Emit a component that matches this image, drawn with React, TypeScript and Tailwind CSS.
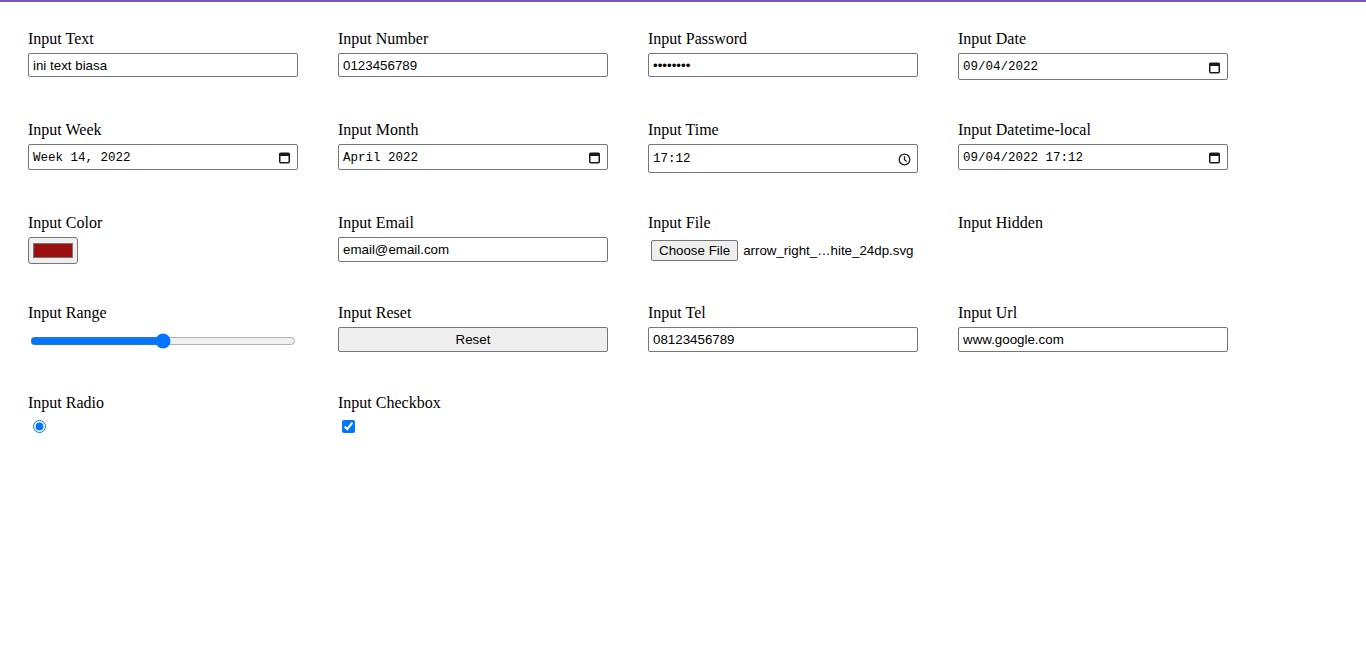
import React from "react";

const label = "block font-['Liberation_Serif',serif] text-[16px] leading-[18px] mb-[5px] text-black";
const field = "block w-[270px] border border-[#767676] rounded-[2px] px-[4px] font-['Liberation_Sans',Arial,sans-serif] text-[13.33px] text-black bg-white outline-none";
const fake = "flex items-center justify-between w-[270px] border border-[#767676] rounded-[2px] pl-[4px] pr-[6px] pt-[2px] font-['Liberation_Mono',monospace] text-[12.5px] text-black bg-white";

const CalendarIcon = () => (
    <svg width="13" height="13" viewBox="0 0 13 13" fill="none" xmlns="http://www.w3.org/2000/svg" className="-mt-[1px]">
        <rect x="1.75" y="2.25" width="9.5" height="9.5" rx="1" stroke="#1a1a1a" strokeWidth="1.5"/>
        <rect x="1.5" y="2" width="10" height="3" fill="#1a1a1a"/>
    </svg>
)

const ClockIcon = () => (
    <svg width="13" height="13" viewBox="0 0 13 13" fill="none" xmlns="http://www.w3.org/2000/svg" className="-mt-[1px]">
        <circle cx="6.5" cy="6.5" r="5.3" stroke="#1a1a1a" strokeWidth="1.3"/>
        <path d="M6.5 3.2V6.7L8.6 8.6" stroke="#1a1a1a" strokeWidth="1.3"/>
    </svg>
)

const Cell: React.FC<{ title: string, children?: React.ReactNode }> = ({title, children}) => {
    return (
        <div>
            <label className={label}>{title}</label>
            {children}
        </div>
    )
}

export default function App() {
    return (
        <div className="min-h-screen bg-white border-t-2 border-[#7d55b2] pt-[28px] pl-[28px]">
            <form className="grid grid-cols-[310px_310px_310px_310px] grid-rows-[91px_93px_90px_90px_auto]">
                <Cell title="Input Text">
                    <input type="text" defaultValue="ini text biasa" className={`${field} h-[24px]`}/>
                </Cell>
                <Cell title="Input Number">
                    <input type="number" defaultValue="0123456789" className={`${field} h-[24px]`}/>
                </Cell>
                <Cell title="Input Password">
                    <input type="password" defaultValue="12345678" className={`${field} h-[24px] text-[12px]`}/>
                </Cell>
                <Cell title="Input Date">
                    <div className={`${fake} h-[27px]`}>
                        <span>09/04/2022</span>
                        <CalendarIcon/>
                    </div>
                </Cell>

                <Cell title="Input Week">
                    <div className={`${fake} h-[26px]`}>
                        <span>Week 14, 2022</span>
                        <CalendarIcon/>
                    </div>
                </Cell>
                <Cell title="Input Month">
                    <div className={`${fake} h-[26px]`}>
                        <span>April 2022</span>
                        <CalendarIcon/>
                    </div>
                </Cell>
                <Cell title="Input Time">
                    <div className={`${fake} h-[29px]`}>
                        <span>17:12</span>
                        <ClockIcon/>
                    </div>
                </Cell>
                <Cell title="Input Datetime-local">
                    <div className={`${fake} h-[26px]`}>
                        <span>09/04/2022 17:12</span>
                        <CalendarIcon/>
                    </div>
                </Cell>

                <Cell title="Input Color">
                    <input type="color" defaultValue="#990f0f"
                           className="block w-[50px] h-[27px] border border-[#767676] rounded-[3px] bg-[#efefef] px-[2px] py-[1px] cursor-pointer"/>
                </Cell>
                <Cell title="Input Email">
                    <input type="email" defaultValue="email@email.com" className={`${field} h-[25px]`}/>
                </Cell>
                <Cell title="Input File">
                    <div className="flex items-center gap-[5px] pt-[3px] font-['Liberation_Sans',Arial,sans-serif] text-[13.33px] text-black">
                        <button type="button"
                                className="ml-[3px] h-[21px] px-[7px] border border-[#767676] rounded-[2px] bg-[#efefef] leading-none">
                            Choose File
                        </button>
                        <span>arrow_right_…hite_24dp.svg</span>
                    </div>
                </Cell>
                <Cell title="Input Hidden">
                    <input type="hidden" value="rahasia"/>
                </Cell>

                <Cell title="Input Range">
                    <input type="range" defaultValue={50} className="block ml-[2px] mt-[11px] w-[266px]"/>
                </Cell>
                <Cell title="Input Reset">
                    <button type="reset"
                            className="block w-[270px] h-[25px] pt-[1px] border border-[#767676] rounded-[2px] bg-[#efefef] font-['Liberation_Sans',Arial,sans-serif] text-[13.33px] text-black">
                        Reset
                    </button>
                </Cell>
                <Cell title="Input Tel">
                    <input type="tel" defaultValue="08123456789" className={`${field} h-[25px]`}/>
                </Cell>
                <Cell title="Input Url">
                    <input type="url" defaultValue="www.google.com" className={`${field} h-[25px]`}/>
                </Cell>

                <Cell title="Input Radio">
                    <input type="radio" defaultChecked name="radio" className="block ml-[5px] mt-[8px]"/>
                </Cell>
                <Cell title="Input Checkbox">
                    <input type="checkbox" defaultChecked className="block ml-[4px] mt-[8px]"/>
                </Cell>
            </form>
        </div>
    )
}
